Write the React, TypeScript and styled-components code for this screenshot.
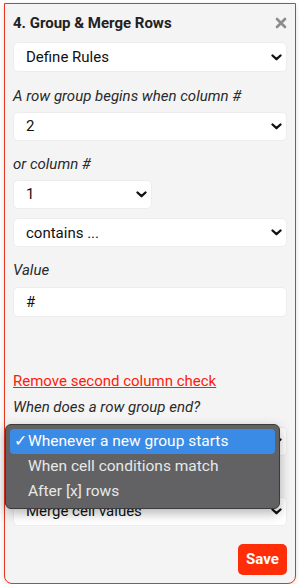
import React from 'react'
import styled, { createGlobalStyle } from 'styled-components'

const GlobalStyle = createGlobalStyle`
  html, body {
    margin: 0;
    padding: 0;
    background: #ffffff;
  }
  body {
    font-family: Roboto, "Liberation Sans", sans-serif;
    color: #222;
  }
`

const Page = styled.div`
  padding: 3px 3px 0 4px;
`

const Panel = styled.section`
  position: relative;
  box-sizing: border-box;
  width: 292px;
  height: 581px;
  padding: 9px 8px 8px;
  background: #f4f4f4;
  border: 1px solid #e8341c;
  border-radius: 0 0 8px 8px;
  box-shadow: 0 2px 6px rgba(0, 0, 0, 0.12);
  display: flex;
  flex-direction: column;
`

const Header = styled.div`
  display: flex;
  align-items: center;
  justify-content: space-between;
  height: 20px;
  margin-bottom: 10px;
`

const Title = styled.h2`
  margin: 0;
  font-size: 15px;
  font-weight: 700;
  color: #222;
`

const Close = styled.button`
  border: none;
  background: none;
  padding: 0;
  width: 12px;
  height: 12px;
  display: flex;
  cursor: pointer;
`

const Label = styled.div<{ $top?: number }>`
  margin-top: ${({ $top }) => $top ?? 0}px;
  height: 20px;
  line-height: 20px;
  font-size: 15px;
  font-style: italic;
  color: #2a2a2a;
`

const Field = styled.div<{ $top?: number; $width?: number }>`
  position: relative;
  box-sizing: border-box;
  margin-top: ${({ $top }) => $top ?? 0}px;
  width: ${({ $width }) => ($width ? `${$width}px` : '100%')};
  height: 30px;
  padding: 0 4px 0 12px;
  background: #fff;
  border: 1px solid #ededed;
  border-radius: 5px;
  display: flex;
  align-items: center;
  justify-content: space-between;
  font-size: 15px;
  color: #111;
`

const Link = styled.a<{ $top?: number }>`
  margin-top: ${({ $top }) => $top ?? 0}px;
  height: 20px;
  line-height: 20px;
  font-size: 15px;
  color: #ff1a0a;
  text-decoration: underline;
  cursor: pointer;
`

const Menu = styled.ul`
  position: absolute;
  left: -9px;
  top: -4px;
  z-index: 2;
  box-sizing: border-box;
  width: 275px;
  margin: 0;
  padding: 4px;
  list-style: none;
  background: #626264;
  border: 1px solid #3b3b3b;
  border-radius: 6px;
  box-shadow: 0 4px 12px rgba(0, 0, 0, 0.3);
`

const Option = styled.li<{ $active?: boolean }>`
  position: relative;
  height: 25px;
  line-height: 24px;
  padding-left: 18px;
  border-radius: 4px;
  font-size: 15.5px;
  color: ${({ $active }) => ($active ? '#ffffff' : '#e8e8e8')};
  background: ${({ $active }) => ($active ? '#3a8be6' : 'transparent')};
`

const Check = styled.span`
  position: absolute;
  left: 4px;
  top: 0;
`

const Footer = styled.div`
  margin-top: 18px;
  display: flex;
  justify-content: flex-end;
`

const SaveButton = styled.button`
  width: 49px;
  height: 31px;
  border: none;
  border-radius: 5px;
  background: #ff2d08;
  color: #fff;
  font-family: Roboto, "Liberation Sans", sans-serif;
  font-size: 15px;
  font-weight: 700;
  cursor: pointer;
`

const Chevron = () => (
  <svg width="11" height="7" viewBox="0 0 11 7">
    <path d="M1.5 1.5 L5.5 5.2 L9.5 1.5" fill="none" stroke="#111" strokeWidth="2.3" strokeLinecap="round" strokeLinejoin="round" />
  </svg>
)

const Select = ({ value, top, width, children }: { value?: string; top?: number; width?: number; children?: React.ReactNode }) => (
  <Field $top={top} $width={width}>
    <span>{value}</span>
    <Chevron />
    {children}
  </Field>
)

const App = (): JSX.Element => {
  const endOptions = ['Whenever a new group starts', 'When cell conditions match', 'After [x] rows']

  return (
    <Page>
      <GlobalStyle />
      <Panel>
        <Header>
          <Title>4. Group &amp; Merge Rows</Title>
          <Close aria-label="close">
            <svg width="12" height="12" viewBox="0 0 12 12">
              <path d="M2 2 L10 10 M10 2 L2 10" stroke="#8c8c8c" strokeWidth="2.6" strokeLinecap="round" />
            </svg>
          </Close>
        </Header>

        <Select value="Define Rules" />
        <Label $top={14}>A row group begins when column #</Label>
        <Select value="2" top={6} />
        <Label $top={13}>or column #</Label>
        <Select value="1" top={6} width={139} />
        <Select value="contains ..." top={9} />
        <Label $top={13}>Value</Label>
        <Field $top={7}>#</Field>

        <Link $top={54}>Remove second column check</Link>
        <Label $top={6}>When does a row group end?</Label>
        {/* open native-style menu covers the select's own value */}
        <Select top={10}>
          <Menu>
            {endOptions.map((o, i) => (
              <Option key={o} $active={i === 0}>
                {i === 0 && <Check>✓</Check>}
                {o}
              </Option>
            ))}
          </Menu>
        </Select>
        <Select value="Merge cell values" top={41} />

        <Footer>
          <SaveButton>Save</SaveButton>
        </Footer>
      </Panel>
    </Page>
  )
}

export default App
